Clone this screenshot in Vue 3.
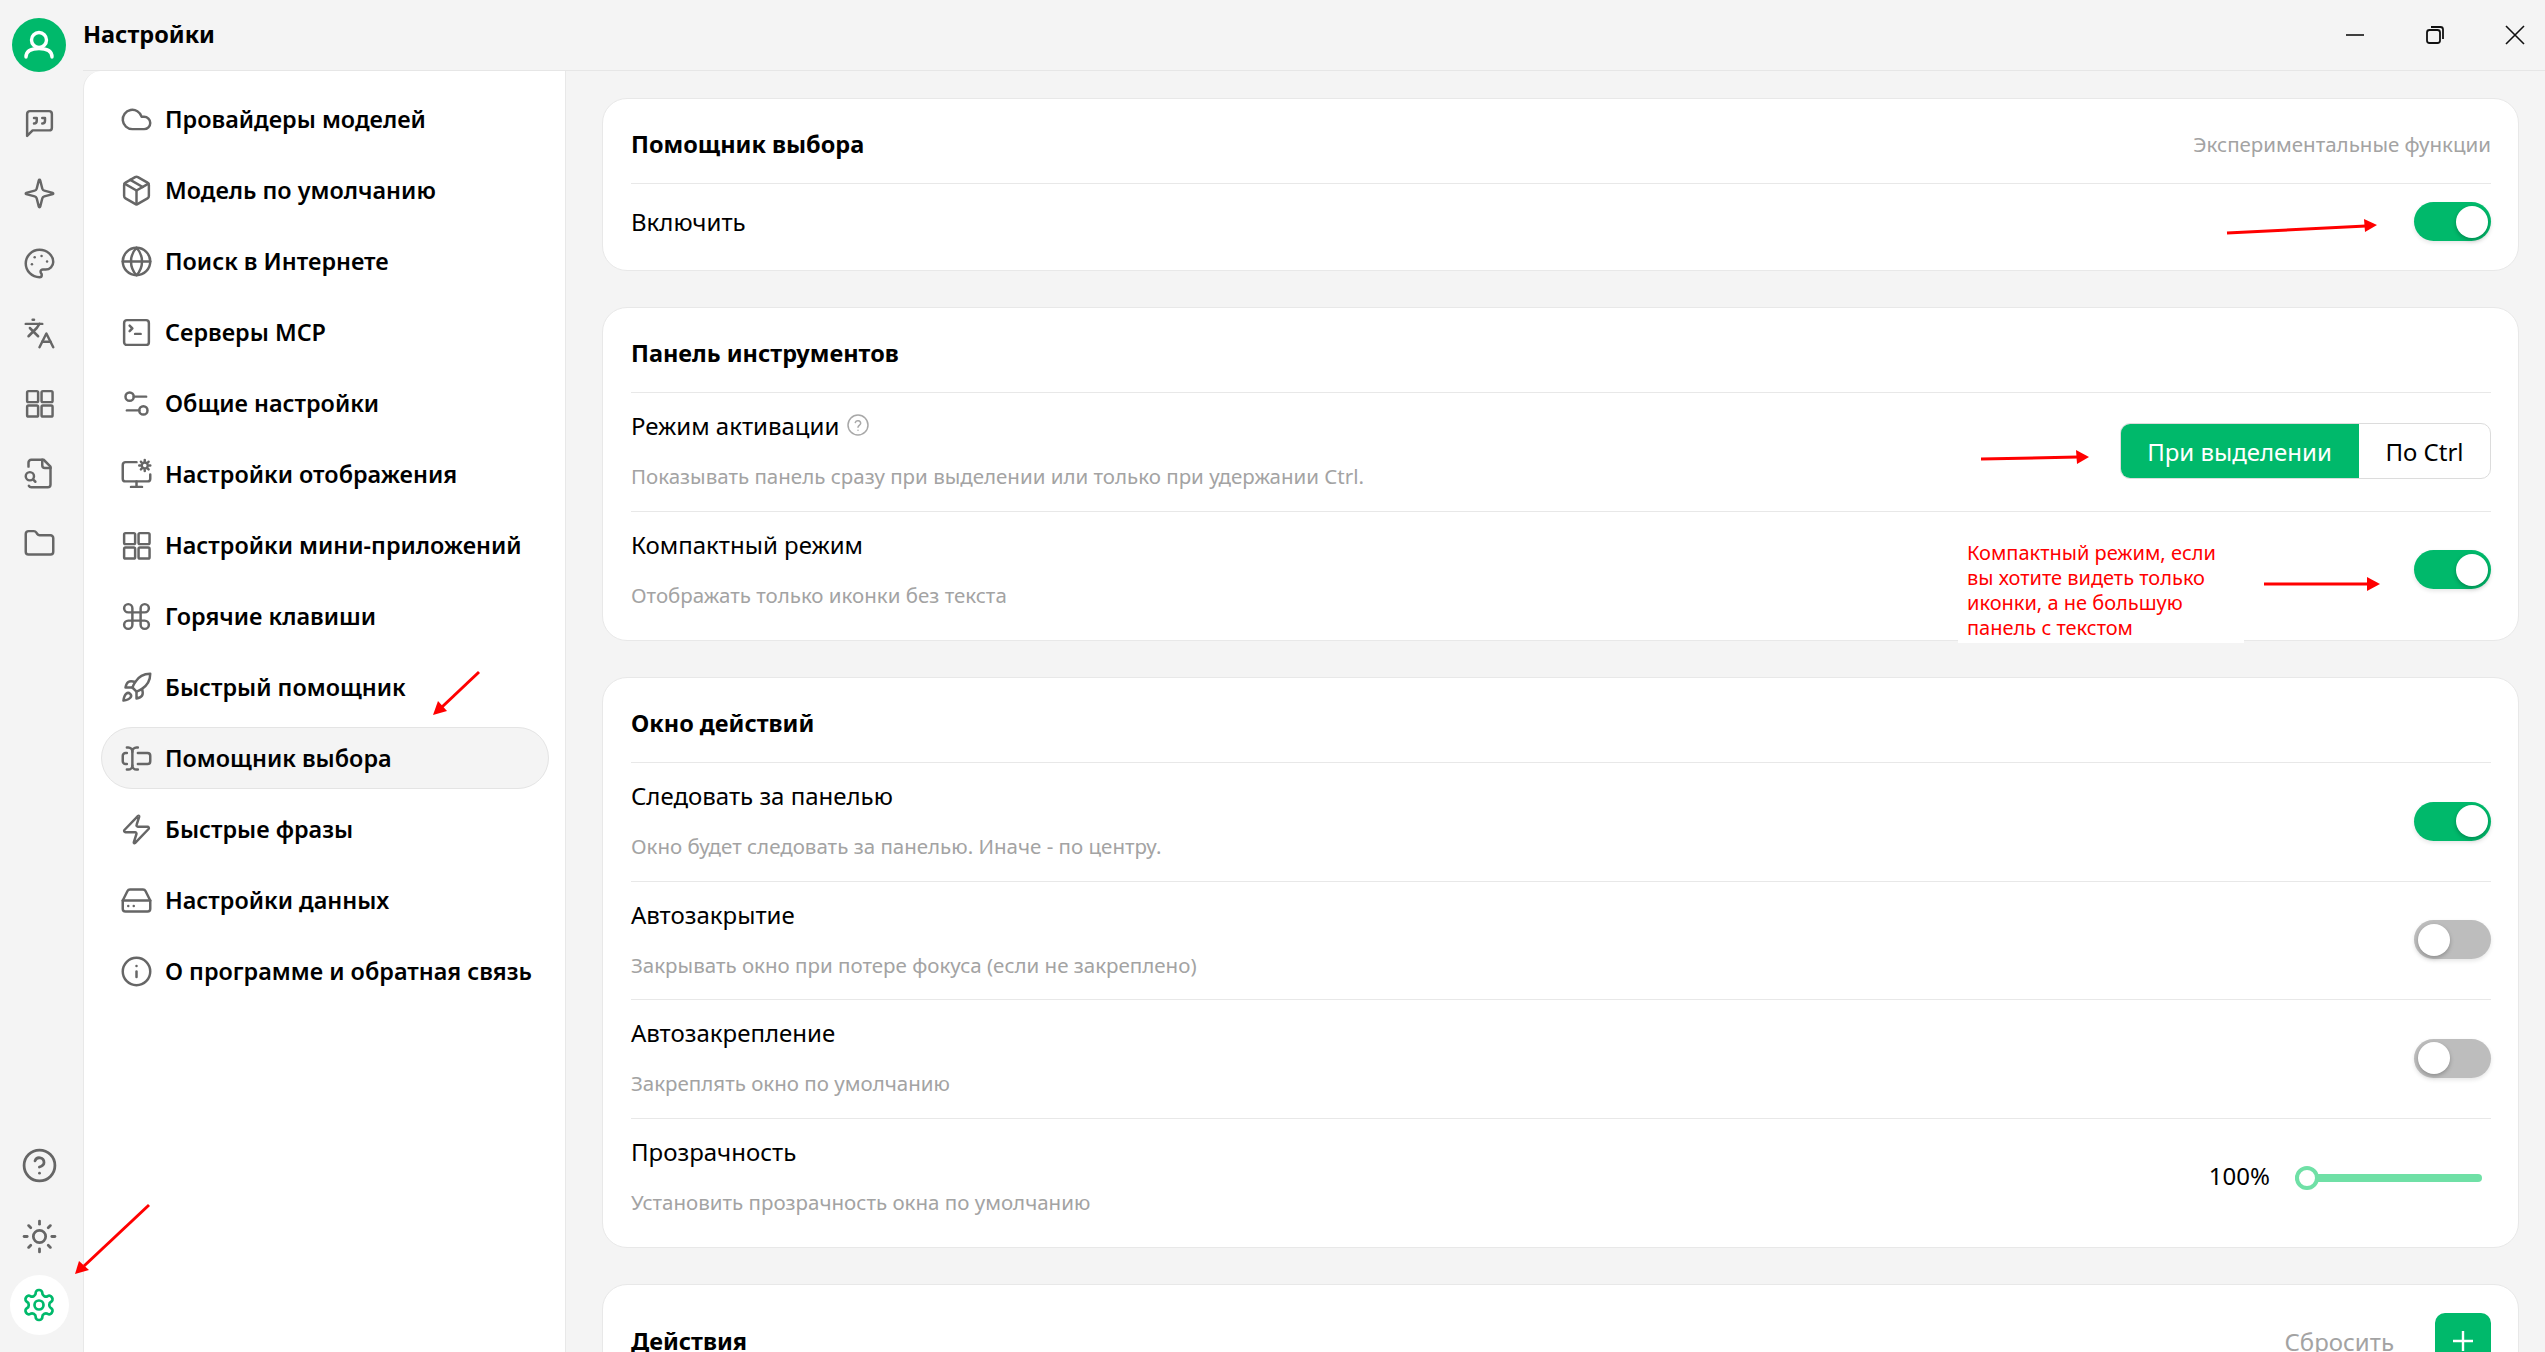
<template>
  <div class="app">
    <aside class="rail">
      <div class="avatar">
        <svg viewBox="0 0 54 54" width="54" height="54" fill="none" stroke="#fff" stroke-width="3.4" stroke-linecap="round">
          <circle cx="27" cy="22" r="7.5" />
          <path d="M14 39c0-6 5-8.500 13-8.500s13 2.500 13 8.500" />
        </svg>
      </div>
      <div class="rail-top">
        <div v-for="name in railTop" :key="name" class="rail-btn">
          <Icon :name="name" :size="33" />
        </div>
      </div>
      <div class="rail-bottom">
        <div class="rail-btn"><Icon name="help" :size="37" /></div>
        <div class="rail-btn"><Icon name="sun" :size="37" /></div>
        <div class="rail-btn settings-btn"><Icon name="settings" :size="36" /></div>
      </div>
    </aside>

    <div class="window">
      <header class="titlebar">
        <span class="page-title">Настройки</span>
        <div class="win-controls">
          <svg width="20" height="20" viewBox="0 0 20 20" fill="none" stroke="#111" stroke-width="1.600"><path d="M1 10h18" /></svg>
          <svg width="20" height="20" viewBox="0 0 20 20" fill="none" stroke="#111" stroke-width="1.800"><rect x="2" y="5" width="13" height="13" rx="2.500" /><path d="M6 2h9.500a2.500 2.500 0 0 1 2.500 2.500V14" /></svg>
          <svg width="20" height="20" viewBox="0 0 20 20" fill="none" stroke="#111" stroke-width="1.600"><path d="M1 1l18 18M19 1L1 19" /></svg>
        </div>
      </header>

      <div class="body">
        <nav class="menu">
          <div v-for="item in menu" :key="item.label" class="menu-item" :class="{ active: item.active }">
            <Icon :name="item.icon" :size="33" />
            <span>{{ item.label }}</span>
          </div>
        </nav>

        <main class="content">
          <section class="card">
            <div class="card-head">
              <h3>Помощник выбора</h3>
              <span class="muted-link small">Экспериментальные функции</span>
            </div>
            <div class="row single">
              <div class="label">Включить</div>
              <div class="toggle on"><i /></div>
            </div>
          </section>

          <section class="card">
            <div class="card-head"><h3>Панель инструментов</h3></div>
            <div class="row">
              <div>
                <div class="label">
                  Режим активации
                  <svg class="hint" width="24" height="24" viewBox="0 0 24 24" fill="none" stroke="#a8a8a8" stroke-width="1.500" stroke-linecap="round">
                    <circle cx="12" cy="12" r="10" /><path d="M9.300 9.500a2.800 2.800 0 0 1 5.400.8c0 1.900-2.700 2.300-2.700 3.900" /><path d="M12 17.200h.01" />
                  </svg>
                </div>
                <div class="sub">Показывать панель сразу при выделении или только при удержании Ctrl.</div>
              </div>
              <div class="segment">
                <span class="seg-on">При выделении</span>
                <span class="seg-off">По Ctrl</span>
              </div>
            </div>
            <div class="row last">
              <div>
                <div class="label">Компактный режим</div>
                <div class="sub">Отображать только иконки без текста</div>
              </div>
              <div class="toggle on"><i /></div>
            </div>
          </section>

          <section class="card">
            <div class="card-head"><h3>Окно действий</h3></div>
            <div v-for="(row, i) in windowRows" :key="row.label" class="row" :class="{ last: i === windowRows.length - 1 }">
              <div>
                <div class="label">{{ row.label }}</div>
                <div class="sub">{{ row.sub }}</div>
              </div>
              <div v-if="row.slider" class="slider-wrap">
                <span class="percent">100%</span>
                <div class="slider"><b /></div>
              </div>
              <div v-else class="toggle" :class="{ on: row.on }"><i /></div>
            </div>
          </section>

          <section class="card">
            <div class="card-head tall">
              <h3>Действия</h3>
              <div class="head-actions">
                <span class="muted-link">Сбросить</span>
                <div class="add-btn">
                  <svg width="26" height="26" viewBox="0 0 26 26" stroke="#fff" stroke-width="2.400"><path d="M13 3v20M3 13h20" /></svg>
                </div>
              </div>
            </div>
          </section>
        </main>
      </div>
    </div>

    <!-- screenshot annotations lying over the UI -->
    <div class="note">
      Компактный режим, если<br />вы хотите видеть только<br />иконки, а не большую<br />панель с текстом
    </div>
    <svg class="arrows" width="2545" height="1352" viewBox="0 0 2545 1352" fill="red" stroke="red" stroke-width="3">
      <template v-for="a in arrows" :key="a.head">
        <path :d="a.line" fill="none" />
        <path :d="a.head" stroke="none" />
      </template>
    </svg>
  </div>
</template>

<script setup>
import { h } from 'vue'

const circle = (cx, cy, r) => `M${cx - r} ${cy}a${r} ${r} 0 1 0 ${r * 2} 0a${r} ${r} 0 1 0 ${-r * 2} 0`
const rect = (x, y, w, hh, r) =>
  `M${x + r} ${y}h${w - 2 * r}a${r} ${r} 0 0 1 ${r} ${r}v${hh - 2 * r}a${r} ${r} 0 0 1 ${-r} ${r}h${-(w - 2 * r)}a${r} ${r} 0 0 1 ${-r} ${-r}v${-(hh - 2 * r)}a${r} ${r} 0 0 1 ${r} ${-r}z`

const grid = [rect(3, 3, 8, 8, 1), rect(13.5, 3, 8, 8, 1), rect(13.5, 13.5, 8, 8, 1), rect(3, 13.5, 8, 8, 1)]

const icons = {
  quote: ['M21 15a2 2 0 0 1-2 2H7l-4 4V5a2 2 0 0 1 2-2h14a2 2 0 0 1 2 2z', 'M8 12a2 2 0 0 0 2-2V8H8', 'M14 12a2 2 0 0 0 2-2V8h-2'],
  sparkle: ['M9.937 15.500A2 2 0 0 0 8.500 14.063l-6.135-1.582a.5.5 0 0 1 0-.962L8.500 9.936A2 2 0 0 0 9.937 8.500l1.582-6.135a.5.5 0 0 1 .963 0L14.063 8.500A2 2 0 0 0 15.500 9.937l6.135 1.581a.5.5 0 0 1 0 .964L15.500 14.063a2 2 0 0 0-1.437 1.437l-1.582 6.135a.5.5 0 0 1-.963 0z'],
  palette: ['M13.500 6.500h.01', 'M17.500 10.500h.01', 'M8.500 7.500h.01', 'M6.500 12.500h.01', 'M12 2C6.500 2 2 6.500 2 12s4.500 10 10 10c.926 0 1.648-.746 1.648-1.688 0-.437-.18-.835-.437-1.125-.29-.289-.438-.652-.438-1.125a1.640 1.640 0 0 1 1.668-1.668h1.996c3.051 0 5.555-2.503 5.555-5.554C21.965 6.012 17.461 2 12 2z'],
  languages: ['m5 8 6 6', 'm4 14 6-6 2-3', 'M2 5h12', 'M7 2h1', 'm22 22-5-10-5 10', 'M14 18h6'],
  grid,
  fileSearch: ['M14 2v4a2 2 0 0 0 2 2h4', 'M4.268 21a2 2 0 0 0 1.727 1H18a2 2 0 0 0 2-2V7l-5-5H6a2 2 0 0 0-2 2v3', 'm9 18-1.500-1.500', circle(5, 14, 3)],
  folder: ['M20 20a2 2 0 0 0 2-2V8a2 2 0 0 0-2-2h-7.900a2 2 0 0 1-1.690-.9L9.600 3.900A2 2 0 0 0 7.930 3H4a2 2 0 0 0-2 2v13a2 2 0 0 0 2 2Z'],
  help: [circle(12, 12, 10), 'M9.090 9a3 3 0 0 1 5.830 1c0 2-3 3-3 3', 'M12 17h.01'],
  sun: [circle(12, 12, 4), 'M12 2v2', 'M12 20v2', 'm4.930 4.930 1.410 1.410', 'm17.660 17.660 1.410 1.410', 'M2 12h2', 'M20 12h2', 'm6.340 17.660-1.410 1.410', 'm19.070 4.930-1.410 1.410'],
  settings: ['M12.220 2h-.44a2 2 0 0 0-2 2v.18a2 2 0 0 1-1 1.730l-.43.25a2 2 0 0 1-2 0l-.15-.08a2 2 0 0 0-2.730.73l-.22.38a2 2 0 0 0 .73 2.730l.15.1a2 2 0 0 1 1 1.720v.51a2 2 0 0 1-1 1.740l-.15.09a2 2 0 0 0-.73 2.730l.22.38a2 2 0 0 0 2.730.73l.15-.08a2 2 0 0 1 2 0l.43.25a2 2 0 0 1 1 1.730V20a2 2 0 0 0 2 2h.44a2 2 0 0 0 2-2v-.18a2 2 0 0 1 1-1.730l.43-.25a2 2 0 0 1 2 0l.15.08a2 2 0 0 0 2.730-.73l.22-.39a2 2 0 0 0-.73-2.730l-.15-.08a2 2 0 0 1-1-1.740v-.5a2 2 0 0 1 1-1.740l.15-.09a2 2 0 0 0 .73-2.730l-.22-.38a2 2 0 0 0-2.730-.73l-.15.08a2 2 0 0 1-2 0l-.43-.25a2 2 0 0 1-1-1.730V4a2 2 0 0 0-2-2z', circle(12, 12, 3)],
  cloud: ['M17.500 19H9a7 7 0 1 1 6.710-9h1.790a4.500 4.500 0 1 1 0 9Z'],
  package: ['M11 21.730a2 2 0 0 0 2 0l7-4A2 2 0 0 0 21 16V8a2 2 0 0 0-1-1.730l-7-4a2 2 0 0 0-2 0l-7 4A2 2 0 0 0 3 8v8a2 2 0 0 0 1 1.730z', 'M12 22V12', 'm3.300 7 8.700 5 8.700-5', 'm7.500 4.270 9 5.150'],
  globe: [circle(12, 12, 10), 'M12 2a14.500 14.500 0 0 0 0 20 14.500 14.500 0 0 0 0-20', 'M2 12h20'],
  terminal: ['m7 11 2-2-2-2', 'M11 13h4', rect(3, 3, 18, 18, 2)],
  sliders: ['M14 17H5', 'M19 7h-9', circle(17, 17, 3), circle(7, 7, 3)],
  monitorCog: ['M12 17v4', 'M8 21h8', 'M12 3H4a2 2 0 0 0-2 2v10a2 2 0 0 0 2 2h16a2 2 0 0 0 2-2v-3', circle(18, 5.500, 2.200), 'M18 1.500v.6', 'M18 8.900v.6', 'M14 5.500h.6', 'M21.400 5.500h.6', 'M15.200 2.700l.4.4', 'M20.400 7.900l.4.4', 'M20.800 2.700l-.4.4', 'M15.600 7.900l-.4.4'],
  command: ['M15 6v12a3 3 0 1 0 3-3H6a3 3 0 1 0 3 3V6a3 3 0 1 0-3 3h12a3 3 0 1 0-3-3'],
  rocket: ['M4.500 16.500c-1.500 1.260-2 5-2 5s3.740-.5 5-2c.71-.84.7-2.130-.09-2.910a2.180 2.180 0 0 0-2.910-.09z', 'm12 15-3-3a22 22 0 0 1 2-3.950A12.880 12.880 0 0 1 22 2c0 2.720-.78 7.500-6 11a22.350 22.350 0 0 1-4 2z', 'M9 12H4s.55-3.030 2-4c1.620-1.080 5 0 5 0', 'M12 15v5s3.030-.55 4-2c1.080-1.620 0-5 0-5'],
  selection: ['M5 4h1a3 3 0 0 1 3 3 3 3 0 0 1 3-3h1', 'M13 20h-1a3 3 0 0 1-3-3 3 3 0 0 1-3 3H5', 'M5 16H4a2 2 0 0 1-2-2v-4a2 2 0 0 1 2-2h1', 'M13 8h7a2 2 0 0 1 2 2v4a2 2 0 0 1-2 2h-7', 'M9 7v10'],
  zap: ['M4 14a1 1 0 0 1-.78-1.630l9.900-10.200a.5.5 0 0 1 .86.46l-1.920 6.020A1 1 0 0 0 13 10h7a1 1 0 0 1 .78 1.630l-9.900 10.200a.5.5 0 0 1-.86-.46l1.920-6.020A1 1 0 0 0 11 14z'],
  drive: ['M22 12H2', 'M5.450 5.110 2 12v6a2 2 0 0 0 2 2h16a2 2 0 0 0 2-2v-6l-3.450-6.890A2 2 0 0 0 16.760 4H7.240a2 2 0 0 0-1.790 1.110z', 'M6 16h.01', 'M10 16h.01'],
  info: [circle(12, 12, 10), 'M12 16v-4', 'M12 8h.01'],
}

const Icon = (props) =>
  h(
    'svg',
    {
      width: props.size,
      height: props.size,
      viewBox: '0 0 24 24',
      fill: 'none',
      stroke: 'currentColor',
      'stroke-width': 1.800,
      'stroke-linecap': 'round',
      'stroke-linejoin': 'round',
    },
    icons[props.name].map((d) => h('path', { d })),
  )
Icon.props = ['name', 'size']

const railTop = ['quote', 'sparkle', 'palette', 'languages', 'grid', 'fileSearch', 'folder']

const menu = [
  { icon: 'cloud', label: 'Провайдеры моделей' },
  { icon: 'package', label: 'Модель по умолчанию' },
  { icon: 'globe', label: 'Поиск в Интернете' },
  { icon: 'terminal', label: 'Серверы MCP' },
  { icon: 'sliders', label: 'Общие настройки' },
  { icon: 'monitorCog', label: 'Настройки отображения' },
  { icon: 'grid', label: 'Настройки мини-приложений' },
  { icon: 'command', label: 'Горячие клавиши' },
  { icon: 'rocket', label: 'Быстрый помощник' },
  { icon: 'selection', label: 'Помощник выбора', active: true },
  { icon: 'zap', label: 'Быстрые фразы' },
  { icon: 'drive', label: 'Настройки данных' },
  { icon: 'info', label: 'О программе и обратная связь' },
]

const windowRows = [
  { label: 'Следовать за панелью', sub: 'Окно будет следовать за панелью. Иначе - по центру.', on: true },
  { label: 'Автозакрытие', sub: 'Закрывать окно при потере фокуса (если не закреплено)', on: false },
  { label: 'Автозакрепление', sub: 'Закреплять окно по умолчанию', on: false },
  { label: 'Прозрачность', sub: 'Установить прозрачность окна по умолчанию', slider: true },
]

const arrows = [
  { line: 'M2227 233L2366 226', head: 'M2364 219L2377 225L2365 232z' },
  { line: 'M1981 459L2078 457', head: 'M2076 450L2089 457L2077 464z' },
  { line: 'M2264 584L2368 584', head: 'M2367 577L2380 584L2367 591z' },
  { line: 'M479 672L442 707', head: 'M438 701L433 715L447 711z' },
  { line: 'M149 1205L84 1266', head: 'M79 1261L75 1274L89 1270z' },
]
</script>

<style>
html,
body {
  margin: 0;
  background: #f4f4f4;
}
</style>

<style scoped>
.app {
  position: relative;
  display: flex;
  width: 2545px;
  height: 1352px;
  overflow: hidden;
  background: #f4f4f4;
  color: #000;
  font-family: "Noto Sans", "Open Sans", sans-serif;
}
.rail {
  width: 83px;
  flex: none;
  display: flex;
  flex-direction: column;
  align-items: center;
  padding: 18px 5px 17px 0;
  box-sizing: border-box;
}
.avatar {
  width: 54px;
  height: 54px;
  border-radius: 50%;
  background: #00b96b;
}
.avatar svg {
  display: block;
}
.rail-top {
  display: flex;
  flex-direction: column;
  gap: 10px;
  margin-top: 21px;
}
.rail-bottom {
  display: flex;
  flex-direction: column;
  gap: 11px;
  margin-top: auto;
}
.rail-btn {
  width: 59px;
  height: 60px;
  display: flex;
  align-items: center;
  justify-content: center;
  color: #666;
}
.settings-btn {
  margin-top: -2px;
  background: #fff;
  border-radius: 50%;
  color: #00b96b;
}
.window {
  flex: 1;
  min-width: 0;
  display: flex;
  flex-direction: column;
}
.titlebar {
  height: 70px;
  flex: none;
  display: flex;
  align-items: center;
  justify-content: space-between;
  border-bottom: 1px solid #e6e6e6;
  box-sizing: content-box;
}
.page-title {
  font-size: 23.500px;
  font-weight: 700;
  margin-top: -2px;
}
.win-controls {
  display: flex;
  gap: 60px;
  padding-right: 20px;
}
.body {
  flex: 1;
  display: flex;
  min-height: 0;
}
.menu {
  width: 483px;
  flex: none;
  box-sizing: border-box;
  background: #fff;
  border-left: 1px solid #e8e8e8;
  border-right: 1px solid #e8e8e8;
  border-top-left-radius: 18px;
  padding: 17px 16px 17px 17px;
  display: flex;
  flex-direction: column;
  gap: 9px;
}
.menu-item {
  height: 62px;
  flex: none;
  display: flex;
  align-items: center;
  gap: 12px;
  padding: 0 18px;
  box-sizing: border-box;
  border: 1px solid transparent;
  border-radius: 31px;
  font-size: 23.400px;
  font-weight: 600;
  white-space: nowrap;
}
.menu-item span {
  margin-top: -1px;
}
.menu-item svg {
  flex: none;
  color: #666;
}
.menu-item.active {
  background: #f4f4f4;
  border-color: #e4e4e4;
}
.content {
  flex: 1;
  min-width: 0;
  padding: 27px 26px 0 36px;
  display: flex;
  flex-direction: column;
  gap: 36px;
}
.card {
  flex: none;
  background: #fff;
  border: 1px solid #e8e8e8;
  border-radius: 25px;
  padding: 0 27px 11px 28px;
}
.card-head {
  display: flex;
  align-items: center;
  justify-content: space-between;
  padding: 28px 0 22px;
  border-bottom: 1px solid #e8e8e8;
}
.card-head h3 {
  margin: 0;
  font-size: 23.500px;
  line-height: 34px;
  font-weight: 700;
}
.muted-link {
  color: #a3a3a3;
  font-size: 24px;
}
.muted-link.small {
  font-size: 20.500px;
}
.head-actions {
  display: flex;
  align-items: center;
  gap: 41px;
}
.add-btn {
  width: 56px;
  height: 56px;
  border-radius: 10px;
  background: #00b96b;
  display: flex;
  align-items: center;
  justify-content: center;
}
.row {
  display: flex;
  align-items: center;
  justify-content: space-between;
  padding: 16px 0 19.500px;
  border-bottom: 1px solid #e8e8e8;
}
.row.last {
  border-bottom: 0;
}
.row.single {
  padding: 18px 0;
  border-bottom: 0;
}
.label {
  display: flex;
  align-items: center;
  gap: 7px;
  font-size: 24px;
  line-height: 34px;
}
.hint {
  margin-top: -2px;
}
.sub {
  margin-top: 18px;
  color: #a3a3a3;
  font-size: 20.500px;
  line-height: 30px;
}
.toggle {
  position: relative;
  width: 77px;
  height: 39px;
  margin-top: 2px;
  border-radius: 20px;
  background: #bdbdbd;
  box-shadow: 0 2px 4px rgba(0, 0, 0, 0.1);
}
.row.single .toggle {
  margin-top: 0;
}
.toggle.on {
  background: #00b96b;
}
.toggle i {
  position: absolute;
  top: 3.500px;
  left: 4px;
  width: 32px;
  height: 32px;
  border-radius: 50%;
  background: #fff;
  box-shadow: 0 2px 4px rgba(0, 0, 0, 0.25);
}
.toggle.on i {
  left: 42px;
}
.segment {
  display: flex;
  height: 56px;
  margin-top: 2px;
  box-sizing: border-box;
  border-radius: 10px;
  overflow: hidden;
  border: 1px solid #dcdcdc;
  font-size: 24px;
}
.seg-on {
  width: 239px;
  margin: -1px 0 -1px -1px;
  background: #00b96b;
  color: #fff;
  display: flex;
  align-items: center;
  justify-content: center;
}
.seg-off {
  width: 131px;
  display: flex;
  align-items: center;
  justify-content: center;
}
.slider-wrap {
  display: flex;
  align-items: center;
  gap: 25px;
  margin-right: 9px;
}
.percent {
  font-size: 24px;
}
.slider {
  position: relative;
  width: 187px;
  height: 8px;
  margin-top: 4px;
  border-radius: 4px;
  background: #6fe0a6;
}
.slider b {
  position: absolute;
  left: 0;
  top: -8px;
  width: 24px;
  height: 24px;
  box-sizing: border-box;
  border-radius: 50%;
  border: 4px solid #6fe0a6;
  background: #fff;
}
.note {
  position: absolute;
  left: 1958px;
  top: 540px;
  width: 286px;
  height: 103px;
  padding: 0 0 0 9px;
  box-sizing: border-box;
  background: #fff;
  color: #f00;
  font-size: 20px;
  line-height: 25px;
  white-space: nowrap;
}
.arrows {
  position: absolute;
  left: 0;
  top: 0;
  pointer-events: none;
}
</style>
